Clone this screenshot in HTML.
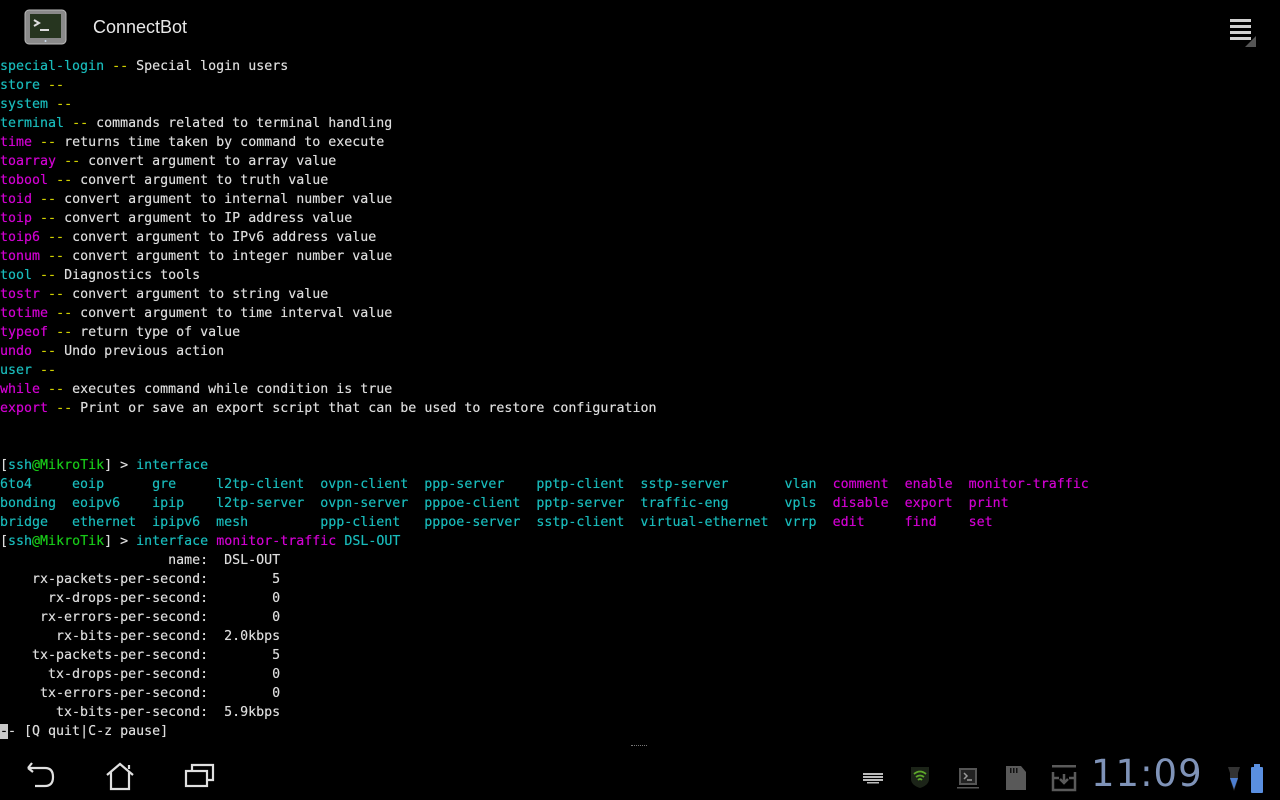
<!DOCTYPE html>
<html><head><meta charset="utf-8">
<style>
html,body{margin:0;padding:0;background:#000;width:1280px;height:800px;overflow:hidden;position:relative;}
.top{position:absolute;left:0;top:0;width:1280px;height:55px;}
.title{position:absolute;left:93px;top:17px;font:18px "Liberation Sans","DejaVu Sans",sans-serif;color:#e8e8e8;}
pre{position:absolute;left:0;top:57px;margin:0;font-family:"DejaVu Sans Mono","Liberation Mono",monospace;font-size:13.3px;line-height:19px;color:#dcdcdc;letter-spacing:0;text-shadow:0 0 0.4px currentColor;}
.c{color:#19baba}.y{color:#d0d000}.m{color:#d000d0}.g{color:#18c818}
.cur{background:#c8c8c8;color:#000}
.bar{position:absolute;left:0;top:752px;width:1280px;height:48px;background:#000;overflow:hidden;}
.clock{position:absolute;left:1091px;top:0px;font:37px "DejaVu Sans","Liberation Sans",sans-serif;color:#7f93b8;letter-spacing:1px;}
</style></head><body>
<div class="top">
<svg style="position:absolute;left:24px;top:9px" width="43" height="38" viewBox="0 0 43 38">
<rect x="1" y="1" width="41" height="34" rx="4" fill="#8a8a8a" stroke="#bbb" stroke-width="1"/>
<rect x="6" y="5" width="31" height="24" fill="#26351f"/>
<path d="M10 11 L15 14 L10 17" stroke="#ddd" stroke-width="2" fill="none"/>
<rect x="16" y="20" width="9" height="2" fill="#ddd"/>
<circle cx="21.5" cy="32" r="1" fill="#cde"/>
</svg>
<div class="title">ConnectBot</div>
<svg style="position:absolute;left:1228px;top:17px" width="30" height="32">
<rect x="2" y="2" width="21" height="3" fill="#d0d0d0"/>
<rect x="2" y="8" width="21" height="3" fill="#d0d0d0"/>
<rect x="2" y="14" width="21" height="3" fill="#d0d0d0"/>
<rect x="2" y="20" width="21" height="3" fill="#d0d0d0"/>
<path d="M28 19 L28 30 L17 30 Z" fill="#555"/>
</svg>
</div>
<pre><span class="c">special-login</span> <span class="y">--</span> Special login users
<span class="c">store</span> <span class="y">--</span>
<span class="c">system</span> <span class="y">--</span>
<span class="c">terminal</span> <span class="y">--</span> commands related to terminal handling
<span class="m">time</span> <span class="y">--</span> returns time taken by command to execute
<span class="m">toarray</span> <span class="y">--</span> convert argument to array value
<span class="m">tobool</span> <span class="y">--</span> convert argument to truth value
<span class="m">toid</span> <span class="y">--</span> convert argument to internal number value
<span class="m">toip</span> <span class="y">--</span> convert argument to IP address value
<span class="m">toip6</span> <span class="y">--</span> convert argument to IPv6 address value
<span class="m">tonum</span> <span class="y">--</span> convert argument to integer number value
<span class="c">tool</span> <span class="y">--</span> Diagnostics tools
<span class="m">tostr</span> <span class="y">--</span> convert argument to string value
<span class="m">totime</span> <span class="y">--</span> convert argument to time interval value
<span class="m">typeof</span> <span class="y">--</span> return type of value
<span class="m">undo</span> <span class="y">--</span> Undo previous action
<span class="c">user</span> <span class="y">--</span>
<span class="m">while</span> <span class="y">--</span> executes command while condition is true
<span class="m">export</span> <span class="y">--</span> Print or save an export script that can be used to restore configuration


[<span class="c">ssh</span><span class="g">@MikroTik</span>] &gt; <span class="c">interface</span>
<span class="c">6to4     eoip      gre     l2tp-client  ovpn-client  ppp-server    pptp-client  sstp-server       vlan</span>  <span class="m">comment  enable  monitor-traffic</span>
<span class="c">bonding  eoipv6    ipip    l2tp-server  ovpn-server  pppoe-client  pptp-server  traffic-eng       vpls</span>  <span class="m">disable  export  print</span>
<span class="c">bridge   ethernet  ipipv6  mesh         ppp-client   pppoe-server  sstp-client  virtual-ethernet  vrrp</span>  <span class="m">edit     find    set</span>
[<span class="c">ssh</span><span class="g">@MikroTik</span>] &gt; <span class="c">interface</span> <span class="m">monitor-traffic</span> <span class="c">DSL-OUT</span>
                     name:  DSL-OUT
    rx-packets-per-second:        5
      rx-drops-per-second:        0
     rx-errors-per-second:        0
       rx-bits-per-second:  2.0kbps
    tx-packets-per-second:        5
      tx-drops-per-second:        0
     tx-errors-per-second:        0
       tx-bits-per-second:  5.9kbps
<span class="cur">-</span>- [Q quit|C-z pause]</pre>
<div style="position:absolute;left:631px;top:745px;width:16px;height:2px;border-top:1px dotted #777"></div>
<div class="bar">
<svg style="position:absolute;left:24px;top:8px" width="40" height="32" viewBox="0 0 40 32">
<path d="M4 8 L8 3 M4 8 L9 12 M4 8 L21 8 Q29 8 29 17 Q29 26 21 26 L11 26" stroke="#e0e0e0" stroke-width="2.2" fill="none"/>
</svg>
<svg style="position:absolute;left:104px;top:8px" width="34" height="32" viewBox="0 0 34 32">
<path d="M3 15 L16 4 L29 15 M7 12 L7 29 L25 29 L25 12 M25 5 L25 9" stroke="#e0e0e0" stroke-width="2.2" fill="none"/>
</svg>
<svg style="position:absolute;left:184px;top:10px" width="34" height="28" viewBox="0 0 34 28">
<rect x="2" y="9" width="21" height="15" stroke="#e0e0e0" stroke-width="2.2" fill="none"/>
<path d="M8 9 L8 3 L29 3 L29 18 L23 18" stroke="#e0e0e0" stroke-width="2.2" fill="none"/>
</svg>
<svg style="position:absolute;left:862px;top:20px" width="22" height="12"><g fill="#bbb">
<rect x="1" y="1" width="20" height="2"/><rect x="1" y="4" width="20" height="2"/><rect x="1" y="7" width="20" height="2"/><rect x="5" y="10" width="12" height="1.5"/></g></svg>
<svg style="position:absolute;left:908px;top:13px" width="24" height="24" viewBox="0 0 24 24">
<path d="M3 2 L21 2 L21 14 Q21 20 12 23 Q3 20 3 14 Z" fill="#1c2418"/>
<path d="M6 9 Q12 4 18 9 M8 12 Q12 9 16 12 M10 15 Q12 13 14 15" stroke="#5ea82a" stroke-width="1.8" fill="none"/>
</svg>
<svg style="position:absolute;left:956px;top:14px" width="24" height="24" viewBox="0 0 24 24">
<rect x="3" y="2" width="18" height="17" fill="#555"/><rect x="5" y="4" width="14" height="13" fill="#222"/>
<path d="M8 7 L11 10 L8 13 M11 14 L16 14" stroke="#999" stroke-width="1.5" fill="none"/>
<rect x="1" y="21" width="22" height="1.5" fill="#555"/>
</svg>
<svg style="position:absolute;left:1004px;top:12px" width="24" height="28" viewBox="0 0 24 28">
<path d="M2 2 L17 2 L22 8 L22 26 L2 26 Z" fill="#595959"/>
<rect x="6" y="4" width="1.5" height="5" fill="#111"/><rect x="9" y="4" width="1.5" height="5" fill="#111"/><rect x="12" y="4" width="1.5" height="5" fill="#111"/>
</svg>
<svg style="position:absolute;left:1050px;top:12px" width="28" height="28" viewBox="0 0 28 28">
<rect x="2" y="1" width="24" height="2.5" fill="#5a5a5a"/>
<path d="M3 8 L3 26 L25 26 L25 8 M3 14 L9 14 M19 14 L25 14" stroke="#5a5a5a" stroke-width="2.5" fill="none"/>
<path d="M14 10 L14 19 M10 15 L14 19 L18 15" stroke="#5a5a5a" stroke-width="2.5" fill="none"/>
</svg>
<div class="clock">11:09</div>
<svg style="position:absolute;left:1226px;top:13px" width="16" height="28" viewBox="0 0 16 28">
<path d="M2 2 L14 2 L12 8 L12 14 L8 26 L4 14 L4 8 Z" fill="#333"/>
<path d="M4 13 L12 13 L8 24 Z" fill="#4d7ed0"/>
</svg>
<svg style="position:absolute;left:1249px;top:11px" width="16" height="32" viewBox="0 0 16 32">
<rect x="5" y="1" width="6" height="3" fill="#5a8fe0"/>
<rect x="2" y="4" width="12" height="26" rx="1" fill="#5a8fe0"/>
</svg>
</div>
</body></html>
